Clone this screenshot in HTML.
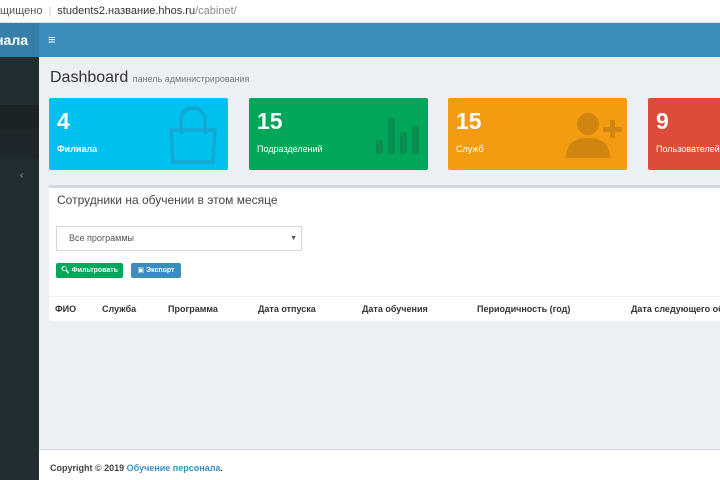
<!DOCTYPE html>
<html><head><meta charset="utf-8"><style>
*{box-sizing:border-box;margin:0;padding:0}
body{width:720px;height:480px;overflow:hidden;background:#ecf0f5;font-family:"Liberation Sans","DejaVu Sans",sans-serif;position:relative}
.abs{position:absolute}
.bar{left:0;top:0;width:720px;height:23px;background:#fff;font-size:11px;color:#333;line-height:23px;border-bottom:1px solid #ddd}
.box{top:98px;height:72px;color:#fff;border-radius:2px;overflow:hidden}
.box .n{position:absolute;left:8px;top:10px;font-size:23px;font-weight:bold}
.box .l{position:absolute;left:8px;top:46px;font-size:9px}
.th{top:304px;font-size:9px;font-weight:bold;color:#333}
</style></head><body>
<div class="abs bar"><span style="color:#555;padding-left:0">щищено</span><span style="color:#ccc;margin:0 6px">|</span>students2.название.hhos.ru<span style="color:#888">/cabinet/</span></div>
<div class="abs" style="left:0;top:23px;width:39px;height:34px;background:#367fa9;color:#fff;font-size:14px;font-weight:bold;line-height:34px;text-align:right;padding-right:11px;overflow:hidden;white-space:nowrap;direction:rtl">нала</div>
<div class="abs" style="left:39px;top:23px;width:681px;height:34px;background:#3c8dbc;color:#fff;font-size:13px;line-height:34px;padding-left:9px">≡</div>
<div class="abs" style="left:0;top:57px;width:39px;height:423px;background:#222d32"></div>
<div class="abs" style="left:0;top:105px;width:39px;height:24px;background:#1a2226"></div>
<div class="abs" style="left:0;top:129px;width:39px;height:30px;background:#1e282c"></div>
<div class="abs" style="left:20px;top:170px;color:#8aa4af;font-size:10px">‹</div>
<div class="abs" style="left:50px;top:69px;font-size:16px;color:#333">Dashboard <span style="font-size:9px;color:#777">панель администрирования</span></div>
<div class="abs box" style="left:49px;width:179px;background:#00c0ef"><div class="n">4</div><div class="l" style="font-weight:bold">Филиала</div>
<svg class="abs" style="left:116px;top:8px" width="56" height="58" viewBox="0 0 56 58"><path d="M6 24h44l-2 32H8z" fill="none" stroke="#12a8d3" stroke-width="3.5"/><path d="M16 28V14a12 12 0 0 1 24 0v14" fill="none" stroke="#12a8d3" stroke-width="3.5"/></svg></div>
<div class="abs box" style="left:249px;width:179px;background:#00a65a"><div class="n">15</div><div class="l">Подразделений</div>
<svg class="abs" style="left:127px;top:12px" width="46" height="46"><g fill="#0b8e4f"><rect x="0" y="30" width="7" height="14"/><rect x="12" y="8" width="7" height="36"/><rect x="24" y="22" width="7" height="22"/><rect x="36" y="16" width="7" height="28"/></g></svg></div>
<div class="abs box" style="left:448px;width:179px;background:#f39c12"><div class="n">15</div><div class="l">Служб</div>
<svg class="abs" style="left:116px;top:12px" width="60" height="48"><g fill="#cf850f"><circle cx="24" cy="14" r="11"/><path d="M2 48c0-14 8-20 22-20s22 6 22 20z"/><rect x="46" y="10" width="5" height="18"/><rect x="39" y="17" width="19" height="5"/></g></svg></div>
<div class="abs box" style="left:648px;width:80px;background:#dd4b39"><div class="n">9</div><div class="l">Пользователей</div></div>
<div class="abs" style="left:49px;top:185px;width:671px;height:136px;background:#fff;border-top:3px solid #d2d6de"></div>
<div class="abs" style="left:57px;top:193px;font-size:12px;color:#444">Сотрудники на обучении в этом месяце</div>
<div class="abs" style="left:56px;top:226px;width:246px;height:25px;border:1px solid #d2d6de;font-size:9px;color:#555;line-height:23px;padding-left:12px">Все программы<span style="position:absolute;right:4px;font-size:7px">▼</span></div>
<div class="abs" style="left:56px;top:263px;width:67px;height:15px;background:#00a65a;border-radius:2px;color:#fff;font-size:7px;line-height:15px;text-align:center;font-weight:bold">🔍︎ Фильтровать</div>
<div class="abs" style="left:131px;top:263px;width:50px;height:15px;background:#3c8dbc;border-radius:2px;color:#fff;font-size:7px;line-height:15px;text-align:center;font-weight:bold">▣ Экспорт</div>
<div class="abs" style="left:49px;top:296px;width:671px;height:1px;background:#f0f0f0"></div>
<div class="abs th" style="left:55px">ФИО</div>
<div class="abs th" style="left:102px">Служба</div>
<div class="abs th" style="left:168px">Программа</div>
<div class="abs th" style="left:258px">Дата отпуска</div>
<div class="abs th" style="left:362px">Дата обучения</div>
<div class="abs th" style="left:477px">Периодичность (год)</div>
<div class="abs th" style="left:631px;white-space:nowrap">Дата следующего об</div>
<div class="abs" style="left:39px;top:449px;width:681px;height:31px;background:#fff;border-top:1px solid #d2d6de;font-size:9px;font-weight:bold;color:#444;padding:13px 0 0 11px">Copyright © 2019 <span style="color:#3c8dbc">Обучение персонала</span>.</div>
</body></html>
